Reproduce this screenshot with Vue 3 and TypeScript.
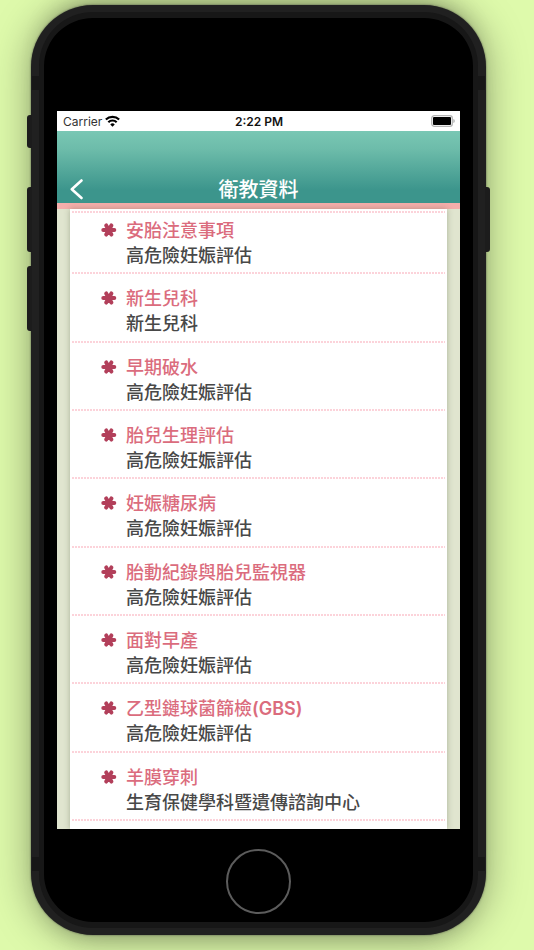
<script setup lang="ts">
interface Article {
  title: string
  abbreviation?: string
  category: string
}

const articles: Article[] = [
  { title: '安胎注意事項', category: '高危險妊娠評估' },
  { title: '新生兒科', category: '新生兒科' },
  { title: '早期破水', category: '高危險妊娠評估' },
  { title: '胎兒生理評估', category: '高危險妊娠評估' },
  { title: '妊娠糖尿病', category: '高危險妊娠評估' },
  { title: '胎動紀錄與胎兒監視器', category: '高危險妊娠評估' },
  { title: '面對早產', category: '高危險妊娠評估' },
  { title: '乙型鏈球菌篩檢', abbreviation: '(GBS)', category: '高危險妊娠評估' },
  { title: '羊膜穿刺', category: '生育保健學科暨遺傳諮詢中心' },
]
</script>

<template>
  <div class="stage">
    <div class="phone">
      <span class="key mute"></span>
      <span class="key volume-up"></span>
      <span class="key volume-down"></span>
      <span class="key power"></span>
      <span class="band band-top"></span>
      <span class="band band-bottom"></span>
      <div class="face">
        <div class="screen">
          <div class="status">
            <div class="carrier">
              <span>Carrier</span>
              <svg width="15" height="12" viewBox="0 0 14 11" fill="none" stroke="#000" stroke-width="2">
                <path d="M0.8 4.2a8.8 8.8 0 0 1 12.4 0" />
                <path d="M3.1 6.7a5.5 5.5 0 0 1 7.8 0" />
                <path d="M7 10.8L4.9 8.7a3 3 0 0 1 4.2 0z" fill="#000" stroke="none" />
              </svg>
            </div>
            <span class="time">2:22 PM</span>
            <div class="battery">
              <svg width="24" height="12" viewBox="0 0 24 12">
                <rect x="0.7" y="0.7" width="20.6" height="10.6" rx="2.6" fill="#fff" stroke="#b5b5b5" stroke-width="1.3" />
                <rect x="2" y="2" width="18" height="8" rx="1" fill="#000" />
                <path d="M22.3 4c1 .3 1.5 1 1.5 2s-.5 1.7-1.5 2z" fill="#b5b5b5" />
              </svg>
            </div>
          </div>
          <header class="header">
            <button class="back" type="button" aria-label="返回">
              <svg width="14" height="22" viewBox="0 0 14 22" fill="none" stroke="#fff" stroke-width="2.6" stroke-linecap="round" stroke-linejoin="round">
                <path d="M11.5 2.5L1.8 11.2L11.5 20" />
              </svg>
            </button>
            <h1>衛教資料</h1>
          </header>
          <main class="content">
            <ul class="list">
              <li v-for="article in articles" :key="article.title">
                <a href="#" class="row">
                  <svg class="flower" width="16" height="16" viewBox="0 0 16 16" stroke="#b23f5a" stroke-width="4" stroke-linecap="round">
                    <path d="M2.3 8H13.3M5.2 3.4L10.4 12.6M10.4 3.4L5.2 12.6" />
                  </svg>
                  <span class="text">
                    <span class="title">{{ article.title }}<b v-if="article.abbreviation">{{ article.abbreviation }}</b></span>
                    <span class="category">{{ article.category }}</span>
                  </span>
                </a>
              </li>
            </ul>
          </main>
        </div>
        <div class="chin">
          <button class="home" type="button" aria-label="主畫面"></button>
        </div>
      </div>
    </div>
  </div>
</template>

<style>
body {
  margin: 0;
  background: #defaab;
}
</style>

<style scoped>
.stage {
  box-sizing: border-box;
  min-height: 100vh;
  padding: 5px 48px 15px 31px;
  display: flex;
  overflow: hidden;
  background: #defaab;
  font-family: Inter, "Noto Sans CJK TC", sans-serif;
}

.phone {
  position: relative;
  flex: 1;
  display: flex;
  padding: 7px 8px;
  border-radius: 62px;
  background: #202020;
  box-shadow:
    0 0 2px #4a5040,
    0 2px 40px rgba(0, 0, 0, 0.36),
    0 -16px 24px -16px rgba(0, 0, 0, 0.3),
    0 16px 24px -16px rgba(0, 0, 0, 0.2);
}

.face {
  position: relative;
  flex: 1;
  min-width: 0;
  display: flex;
  flex-direction: column;
  padding: 93px 13px 0;
  border: 6px solid #171717;
  border-width: 6px 5px;
  border-radius: 54px;
  background: #000;
}

.key {
  position: absolute;
  left: -4px;
  width: 5px;
  height: 65px;
  border-radius: 3px 0 0 3px;
  background: #1c1c1c;
}

.mute {
  top: 110px;
  height: 33px;
}

.volume-up {
  top: 182px;
}

.volume-down {
  top: 261px;
}

.power {
  top: 182px;
  left: auto;
  right: -4px;
  border-radius: 0 3px 3px 0;
}

.band {
  position: absolute;
  left: 1px;
  right: 1px;
  height: 14px;
  background: #171717;
}

.band-top {
  top: 71px;
}

.band-bottom {
  bottom: 64px;
}

.screen {
  flex: 1;
  display: flex;
  flex-direction: column;
  overflow: hidden;
  background: #e0e5cf;
}

.status {
  display: grid;
  grid-template-columns: 1fr auto 1fr;
  align-items: center;
  height: 20px;
  padding: 0 5px 0 6px;
  background: #fff;
  color: #111;
  font-size: 12px;
}

.carrier {
  display: flex;
  align-items: center;
  gap: 3px;
  color: #333;
}

.time {
  font-weight: 600;
}

.battery {
  display: flex;
  justify-content: flex-end;
}

.header {
  display: grid;
  grid-template-columns: 40px 1fr 40px;
  align-items: end;
  height: 72px;
  border-bottom: 6px solid #f5aeab;
  background: linear-gradient(#79c7b4, #6dbcaa 25%, #3c958c 82%, #3c958c);
}

.back {
  display: flex;
  padding: 3px 13px;
  border: 0;
  background: none;
}

h1 {
  margin: 0;
  color: #fff;
  font-size: 20px;
  font-weight: 500;
  line-height: 26px;
  text-align: center;
}

.content {
  flex: 1;
  display: flex;
  padding: 0 13px;
}

.list {
  flex: 1;
  display: flex;
  flex-direction: column;
  margin: 0;
  padding: 0 2px 8px;
  list-style: none;
  background: #fff;
  box-shadow: 0 0 6px rgba(70, 80, 50, 0.35);
}

.list::before {
  content: "";
  height: 2px;
  margin: 2px 0 -7px;
  background: repeating-linear-gradient(90deg, #fcd3da 0 2px, #fff 2px 3px);
}

li {
  flex: 1;
  display: flex;
  flex-direction: column;
}

li::after {
  content: "";
  height: 2px;
  background: repeating-linear-gradient(90deg, #fcd3da 0 2px, #fff 2px 3px);
}

.row {
  flex: 1;
  display: flex;
  gap: 9px;
  padding: 12px 12px 4px 29px;
  color: #484848;
  font-size: 18px;
  font-weight: 500;
  line-height: 25px;
  text-decoration: none;
}

.flower {
  flex: none;
  margin-top: 4px;
}

.text {
  display: flex;
  flex-direction: column;
}

.title {
  color: #db6c7d;
}

.title b {
  font-weight: 600;
}

.chin {
  display: flex;
  justify-content: center;
  padding: 20px 0 8px;
}

.home {
  width: 65px;
  height: 65px;
  padding: 0;
  border: 2px solid #5c5c5c;
  border-radius: 50%;
  background: none;
}
</style>
